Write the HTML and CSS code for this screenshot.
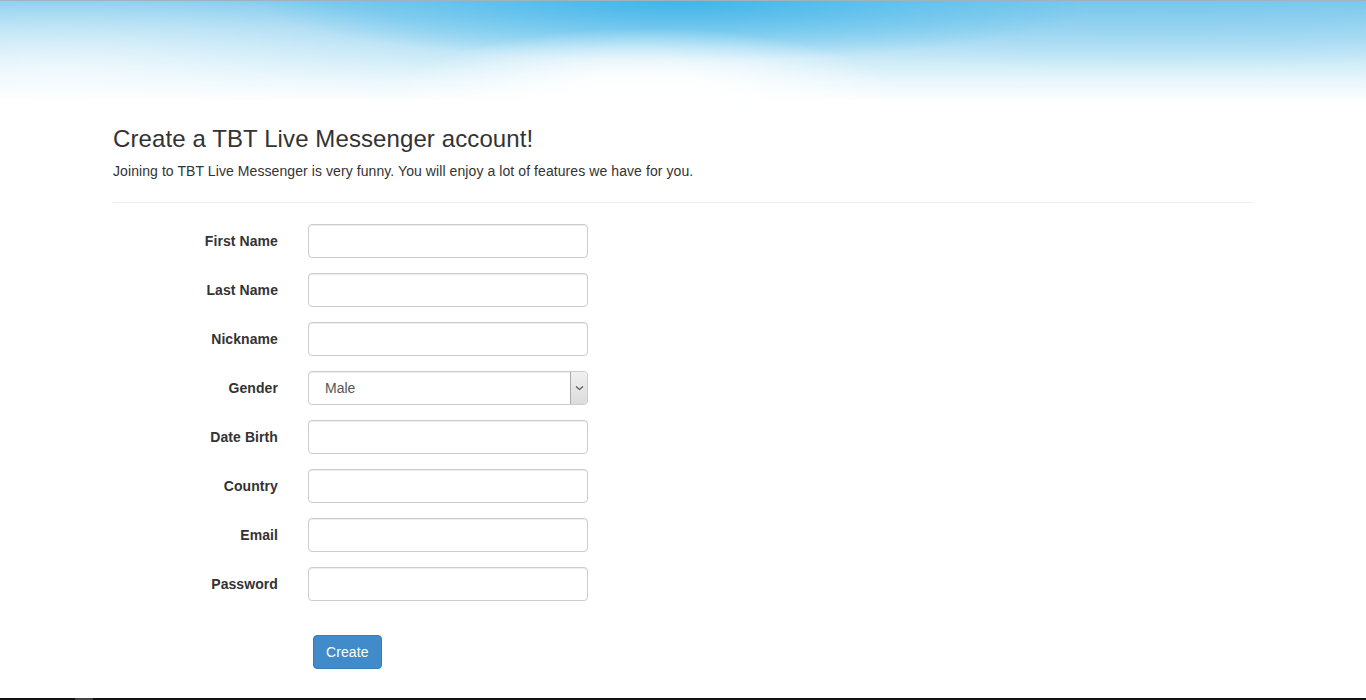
FILE: index.html
```html
<!DOCTYPE html>
<html>
<head>
<meta charset="utf-8">
<title>Create account</title>
<link rel="stylesheet" href="styles.css">
</head>
<body>
<header class="banner"></header>
<main class="container">
  <h3 class="title">Create a TBT Live Messenger account!</h3>
  <p class="lead-text">Joining to TBT Live Messenger is very funny. You will enjoy a lot of features we have for you.</p>
  <hr class="divider">
  <form class="form">
    <div class="form-group"><label class="label">First Name</label><input class="control" type="text"></div>
    <div class="form-group"><label class="label">Last Name</label><input class="control" type="text"></div>
    <div class="form-group"><label class="label">Nickname</label><input class="control" type="text"></div>
    <div class="form-group"><label class="label">Gender</label>
      <div class="select-wrap">
        <select class="control select"><option>Male</option><option>Female</option></select>
        <span class="select-arrow"><svg width="9" height="6" viewBox="0 0 9 6"><path d="M1 1.5 L4.5 4.5 L8 1.5" fill="none" stroke="#555" stroke-width="1.1"/></svg></span>
      </div>
    </div>
    <div class="form-group"><label class="label">Date Birth</label><input class="control" type="text"></div>
    <div class="form-group"><label class="label">Country</label><input class="control" type="text"></div>
    <div class="form-group"><label class="label">Email</label><input class="control" type="text"></div>
    <div class="form-group"><label class="label">Password</label><input class="control" type="password"></div>
    <div class="form-group actions"><span class="label"></span><button class="btn" type="button">Create</button></div>
  </form>
</main>
<div class="taskbar"><span class="taskbar-item"></span></div>
</body>
</html>
```
FILE: styles.css
```css
* { box-sizing: border-box; }
html, body { margin: 0; padding: 0; }
body {
  font-family: "Liberation Sans", Arial, Helvetica, sans-serif;
  font-size: 14px;
  line-height: 1.428571;
  letter-spacing: 0.08px;
  color: #333;
  background: #fff;
  height: 700px;
  overflow: hidden;
  position: relative;
}
.banner {
  height: 100px;
  border-top: 1px solid #9db4c0;
  background:
    radial-gradient(ellipse 260px 75px at 645px 102px, rgba(255,255,255,1) 0%, rgba(255,255,255,0.9) 35%, rgba(255,255,255,0) 100%),
    radial-gradient(ellipse 420px 60px at 680px 0px, rgba(50,175,230,0.8) 0%, rgba(70,185,235,0.45) 55%, rgba(80,190,235,0) 100%),
    radial-gradient(ellipse 500px 70px at 1150px 0px, rgba(110,195,235,0.45) 0%, rgba(110,195,235,0) 100%),
    radial-gradient(ellipse 420px 90px at 60px 70px, rgba(255,255,255,0.6) 0%, rgba(255,255,255,0) 100%),
    linear-gradient(180deg, #80caed 0%, #a2d8f2 25%, #c6e8f7 55%, #eaf7fc 82%, #fbfeff 100%);
}
.container {
  width: 1170px;
  margin: 0 auto;
  padding: 0 15px;
}
.title {
  font-size: 24px;
  font-weight: 500;
  line-height: 1.1;
  margin: 26px 0 10px;
  color: #333;
  letter-spacing: 0.1px;
}
.lead-text {
  margin: 0 0 10px;
  font-size: 14px;
}
.divider {
  border: 0;
  border-top: 1px solid #eee;
  margin: 20px 0 21px;
  height: 0;
}
.form {
  display: flex;
  flex-direction: column;
  gap: 15px;
  margin-left: -15px;
}
.form-group {
  display: flex;
  align-items: flex-start;
}
.label {
  width: 195px;
  flex: none;
  text-align: right;
  padding: 8px 15px 0 15px;
  font-weight: bold;
  color: #333;
}
.control {
  margin-left: 15px;
  width: 280px;
  height: 34px;
  padding: 6px 12px;
  font-family: inherit;
  font-size: 14px;
  color: #555;
  background: #fff;
  border: 1px solid #ccc;
  border-radius: 4px;
  box-shadow: inset 0 1px 1px rgba(0,0,0,0.075);
  outline: none;
}
.select-wrap {
  position: relative;
  margin-left: 15px;
  width: 280px;
}
.select-wrap .control {
  margin-left: 0;
}
.select {
  -webkit-appearance: none;
  appearance: none;
  padding-left: 16px;
}
.select-arrow {
  position: absolute;
  right: 1px;
  top: 1px;
  width: 17px;
  height: 32px;
  background: linear-gradient(180deg, #f0f0f0, #dcdcdc);
  border-left: 1px solid #aaa;
  border-radius: 0 3px 3px 0;
  display: flex;
  align-items: center;
  justify-content: center;
}
.actions {
  margin-top: 19px;
}
.btn {
  margin-left: 20px;
  height: 34px;
  padding: 6px 12px;
  font-family: inherit;
  font-size: 14px;
  letter-spacing: 0.08px;
  color: #fff;
  background: #428bca;
  border: 1px solid #357ebd;
  border-radius: 4px;
  cursor: pointer;
}
.taskbar {
  position: absolute;
  left: 0;
  right: 0;
  bottom: 0;
  height: 2px;
  background: #111;
}
.taskbar-item {
  position: absolute;
  left: 75px;
  top: 0;
  width: 18px;
  height: 2px;
  background: #444;
}
```
